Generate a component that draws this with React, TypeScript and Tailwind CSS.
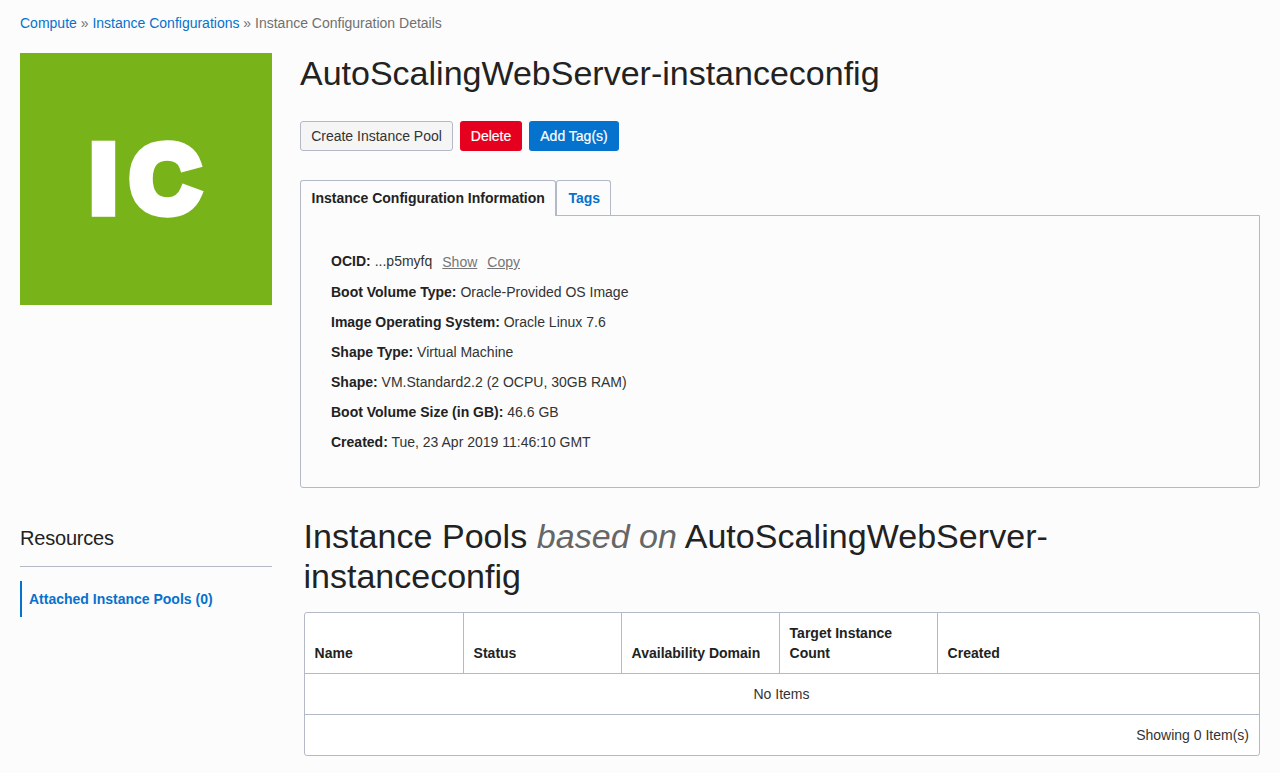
const details = [
  ['Boot Volume Type:', 'Oracle-Provided OS Image'],
  ['Image Operating System:', 'Oracle Linux 7.6'],
  ['Shape Type:', 'Virtual Machine'],
  ['Shape:', 'VM.Standard2.2 (2 OCPU, 30GB RAM)'],
  ['Boot Volume Size (in GB):', '46.6 GB'],
  ['Created:', 'Tue, 23 Apr 2019 11:46:10 GMT'],
];

function Breadcrumb() {
  return (
    <nav className="h-[53px] pt-[13px] text-[#707070]">
      <a className="text-[#0572ce]">Compute</a> » <a className="text-[#0572ce]">Instance Configurations</a> » Instance
      Configuration Details
    </nav>
  );
}

function Actions() {
  return (
    <div className="mt-7 flex h-[30px] gap-[7px]">
      <button className="w-[153px] rounded-[3px] border border-[#b4bac5] bg-[#f5f5f5] text-[#333]">Create Instance Pool</button>
      <button className="w-[62px] rounded-[3px] bg-[#e6001f] text-white [-webkit-text-stroke:0.2px_white]">Delete</button>
      <button className="w-[90px] rounded-[3px] bg-[#0572ce] text-white [-webkit-text-stroke:0.2px_white]">Add Tag(s)</button>
    </div>
  );
}

function InfoPanel() {
  return (
    <section className="mt-[29px]">
      <div className="flex h-9 font-bold leading-[35px]">
        <div className="z-10 w-64 rounded-t-[3px] border border-b-0 border-[#b4bac5] bg-[#fcfcfc] pl-[10.5px]">
          Instance Configuration Information
        </div>
        <div className="h-[35px] w-[55px] rounded-t-[3px] border border-b-0 border-[#b4bac5] pl-[11.5px] text-[#0572ce]">
          Tags
        </div>
      </div>
      <div className="-mt-px h-[273px] rounded-b-[3px] border border-[#b4bac5] pl-[30px] pt-[30px] leading-[30px] text-[#333]">
        <div className="flex h-[31px]">
          <b className="text-[#222]">OCID:</b>
          <span className="ml-1">...p5myfq</span>
          <a className="ml-[10px] pt-px text-[#767676] underline">Show</a>
          <a className="ml-[10px] pt-px text-[#767676] underline">Copy</a>
        </div>
        {details.map(([label, value]) => (
          <div key={label}>
            <b className="text-[#222]">{label}</b> {value}
          </div>
        ))}
      </div>
    </section>
  );
}

function PoolsTable() {
  return (
    <div className="ml-1 mt-4 rounded-[3px] border border-[#b4bac5] bg-white text-[#333]">
      <div className="grid h-[60px] grid-cols-[159px_158px_158px_158px_1fr] font-bold text-[#222]">
        {['Name', 'Status', 'Availability Domain', 'Target Instance Count', 'Created'].map((name) => (
          <div
            key={name}
            className="flex items-end border-r border-[#b4bac5] px-[9.6px] pb-[10px] last:border-r-0"
          >
            {name}
          </div>
        ))}
      </div>
      <div className="h-[41px] border-t border-[#b4bac5] pr-px pt-[10px] text-center">No Items</div>
      <div className="h-[41px] border-t border-[#b4bac5] pr-[10px] pt-[10px] text-right">Showing 0 Item(s)</div>
    </div>
  );
}

export default function App() {
  return (
    <div className="h-[773px] w-[1280px] overflow-hidden bg-[#fcfcfc] px-5 font-['Liberation_Sans',Arial,sans-serif] text-sm leading-5 text-[#222]">
      <Breadcrumb />
      <div className="flex h-[435px] gap-7">
        <div className="flex size-[252px] shrink-0 items-center justify-center bg-[#77b319] text-[97px] font-bold leading-none tracking-[12.9px] text-white [-webkit-text-stroke:9.4px_white]">
          <span className="pb-px pl-[11px]">IC</span>
        </div>
        <main className="w-[960px]">
          <h1 className="text-[34px] leading-10">AutoScalingWebServer-instanceconfig</h1>
          <Actions />
          <InfoPanel />
        </main>
      </div>
      <div className="mt-7 flex gap-7">
        <aside className="w-[252px] shrink-0">
          <h3 className="h-[51px] border-b border-[#b4bac5] pt-3 text-xl leading-5 tracking-[-0.2px]">Resources</h3>
          <div className="mt-[14px] h-9 border-l-2 border-[#0572ce] pl-[7px] font-bold leading-9 text-[#0572ce]">
            Attached Instance Pools (0)
          </div>
        </aside>
        <div className="w-[960px]">
          <h2 className="pl-[3.5px] text-[34px] leading-10">
            <span className="tracking-[0.05px]">
              Instance Pools <em className="text-[#666]">based on</em> AutoScalingWebServer-
            </span>
            <br />
            instanceconfig
          </h2>
          <PoolsTable />
        </div>
      </div>
    </div>
  );
}
